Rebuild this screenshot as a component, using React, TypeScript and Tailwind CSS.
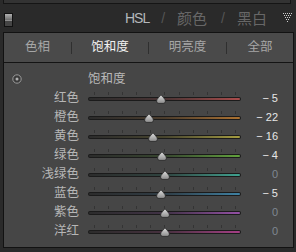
import React from "react";

const rows = [
  { name: "红色", value: -5, track: "bg-linear-to-r from-[#2c2c2c] via-[#4a3434] to-[#aa4c4c]" },
  { name: "橙色", value: -22, track: "bg-linear-to-r from-[#2c2c2c] via-[#4c3d2c] to-[#ac7230]" },
  { name: "黄色", value: -16, track: "bg-linear-to-r from-[#2c2c2c] via-[#48452e] to-[#a49c40]" },
  { name: "绿色", value: -4, track: "bg-linear-to-r from-[#2c2c2c] via-[#37462e] to-[#62a23c]" },
  { name: "浅绿色", value: 0, track: "bg-linear-to-r from-[#2c2c2c] via-[#2f4440] to-[#3ea290]" },
  { name: "蓝色", value: -5, track: "bg-linear-to-r from-[#2c2c2c] via-[#2f3d46] to-[#3e82a4]" },
  { name: "紫色", value: 0, track: "bg-linear-to-r from-[#2c2c2c] via-[#413246] to-[#9450a6]" },
  { name: "洋红", value: 0, track: "bg-linear-to-r from-[#2c2c2c] via-[#46303e] to-[#a63e86]" },
];

const tabs = [
  { label: "色相", width: "w-[67px]", active: false },
  { label: "饱和度", width: "w-[76px]", active: true },
  { label: "明亮度", width: "w-[77px]", active: false },
  { label: "全部", width: "flex-1", active: false },
];

const Thumb = () => (
  <svg width="10" height="10" viewBox="0 0 10 10">
    <defs>
      <linearGradient id="thumbFill" x1="0" y1="0" x2="0" y2="1">
        <stop offset="0" stopColor="#e2e2e2" />
        <stop offset="1" stopColor="#8a8a8a" />
      </linearGradient>
    </defs>
    <path
      d="M5 0.6 C6 2.6 9.4 4.8 9.4 7 C9.4 8.6 8.5 9.4 7 9.4 L3 9.4 C1.5 9.4 0.6 8.6 0.6 7 C0.6 4.8 4 2.6 5 0.6Z"
      fill="url(#thumbFill)"
      stroke="#242424"
      strokeWidth="0.8"
    />
  </svg>
);

const DottedTriangle = () => {
  const dots: [number, number][] = [];
  for (let r = 0; r < 5; r++) {
    for (let c = 0; c < 5 - r; c++) dots.push([r + c * 2, r * 2]);
  }
  return (
    <svg width="9" height="10" viewBox="0 0 9 10">
      {dots.map(([x, y], i) => (
        <rect key={i} x={x} y={y} width="1" height="1" fill="#cfcfcf" />
      ))}
    </svg>
  );
};

const formatValue = (v: number) => (v === 0 ? "0" : v < 0 ? `− ${-v}` : `+ ${v}`);

export default function App() {
  return (
    <div
      className="w-[296px] h-[252px] bg-[#2a2a2a] overflow-hidden select-none"
      style={{ fontFamily: '"Liberation Sans", "Noto Sans CJK SC", sans-serif' }}
    >
      {/* bottom edge of the panel above */}
      <div className="h-[4px] ml-[3px] w-[288px] bg-[#333333] border-x border-b border-[#151515]" />

      {/* header */}
      <div className="h-[28px] flex items-center pl-[4px] pr-[4px]">
        <div className="w-[9px] h-[14px] mt-[3px] border border-[#111] flex flex-col">
          <div className="h-[6px] bg-linear-to-b from-[#b0b0b0] to-[#6c6c6c]" />
          <div className="h-[1px] bg-[#8e8e8e]" />
          <div className="flex-1 bg-[#454545]" />
        </div>
        <div className="ml-auto flex items-center leading-none">
          <span className="text-[14px] tracking-[-1px] text-[#b4b8bc]">HSL</span>
          <span className="ml-[12px] text-[14px] text-[#555]">/</span>
          <span className="ml-[12px] text-[15px] text-[#676767]">颜色</span>
          <span className="ml-[14px] text-[14px] text-[#555]">/</span>
          <span className="ml-[12px] text-[15px] text-[#676767]">黑白</span>
          <span className="ml-[16px] flex">
            <DottedTriangle />
          </span>
        </div>
      </div>

      {/* panel */}
      <div className="ml-[3px] w-[291px] border border-[#121212] bg-[#464646]">
        <div className="h-[30px] flex items-center bg-[#4a4a4a] border-b border-[#141414]">
          {tabs.map((t, i) => (
            <React.Fragment key={t.label}>
              {i > 0 && <div className="w-[1px] h-[12px] bg-[#2f2f2f]" />}
              <div
                className={`${t.width} text-center text-[12.5px] ${
                  t.active ? "text-[#f2f2f2]" : "text-[#a6a6a6]"
                }`}
              >
                {t.label}
              </div>
            </React.Fragment>
          ))}
        </div>

        <div className="pt-[6px] pb-[6px]">
          <div className="h-[20px] flex items-center">
            <svg className="ml-[8px]" width="10" height="10" viewBox="0 0 10 10">
              <circle cx="5" cy="5" r="4.2" fill="#3a3a3a" stroke="#9a9a9a" strokeWidth="1" />
              <circle cx="5" cy="5" r="1.5" fill="#b0b0b0" />
            </svg>
            <span className="ml-[66px] text-[12.5px] text-[#b8b8b8]">饱和度</span>
          </div>

          {rows.map((r) => (
            <div key={r.name} className="h-[19px] flex items-center">
              <div className="w-[75px] text-right text-[12.5px] text-[#b6b6b6] leading-none">{r.name}</div>
              <div className="ml-[9px] w-[153px] h-full relative flex flex-col">
                <div className="mt-[3px] h-[3px] flex justify-between pl-[6px] pr-[5px]">
                  {Array.from({ length: 11 }).map((_, i) => (
                    <div key={i} className="w-[1px] h-full bg-[#343434]" />
                  ))}
                </div>
                <div className="mt-[2px] h-[4px] rounded-full bg-[#1b1b1b] p-[1px]">
                  <div className={`h-full rounded-full ${r.track}`} />
                </div>
                <div className="absolute top-[5px]" style={{ left: 72 + r.value * 0.73 }}>
                  <Thumb />
                </div>
              </div>
              <div
                className={`w-[37px] text-right text-[11px] leading-none ${
                  r.value === 0 ? "text-[#7f8891]" : "text-[#e6e6e6]"
                }`}
              >
                {formatValue(r.value)}
              </div>
            </div>
          ))}
        </div>
      </div>
    </div>
  );
}
